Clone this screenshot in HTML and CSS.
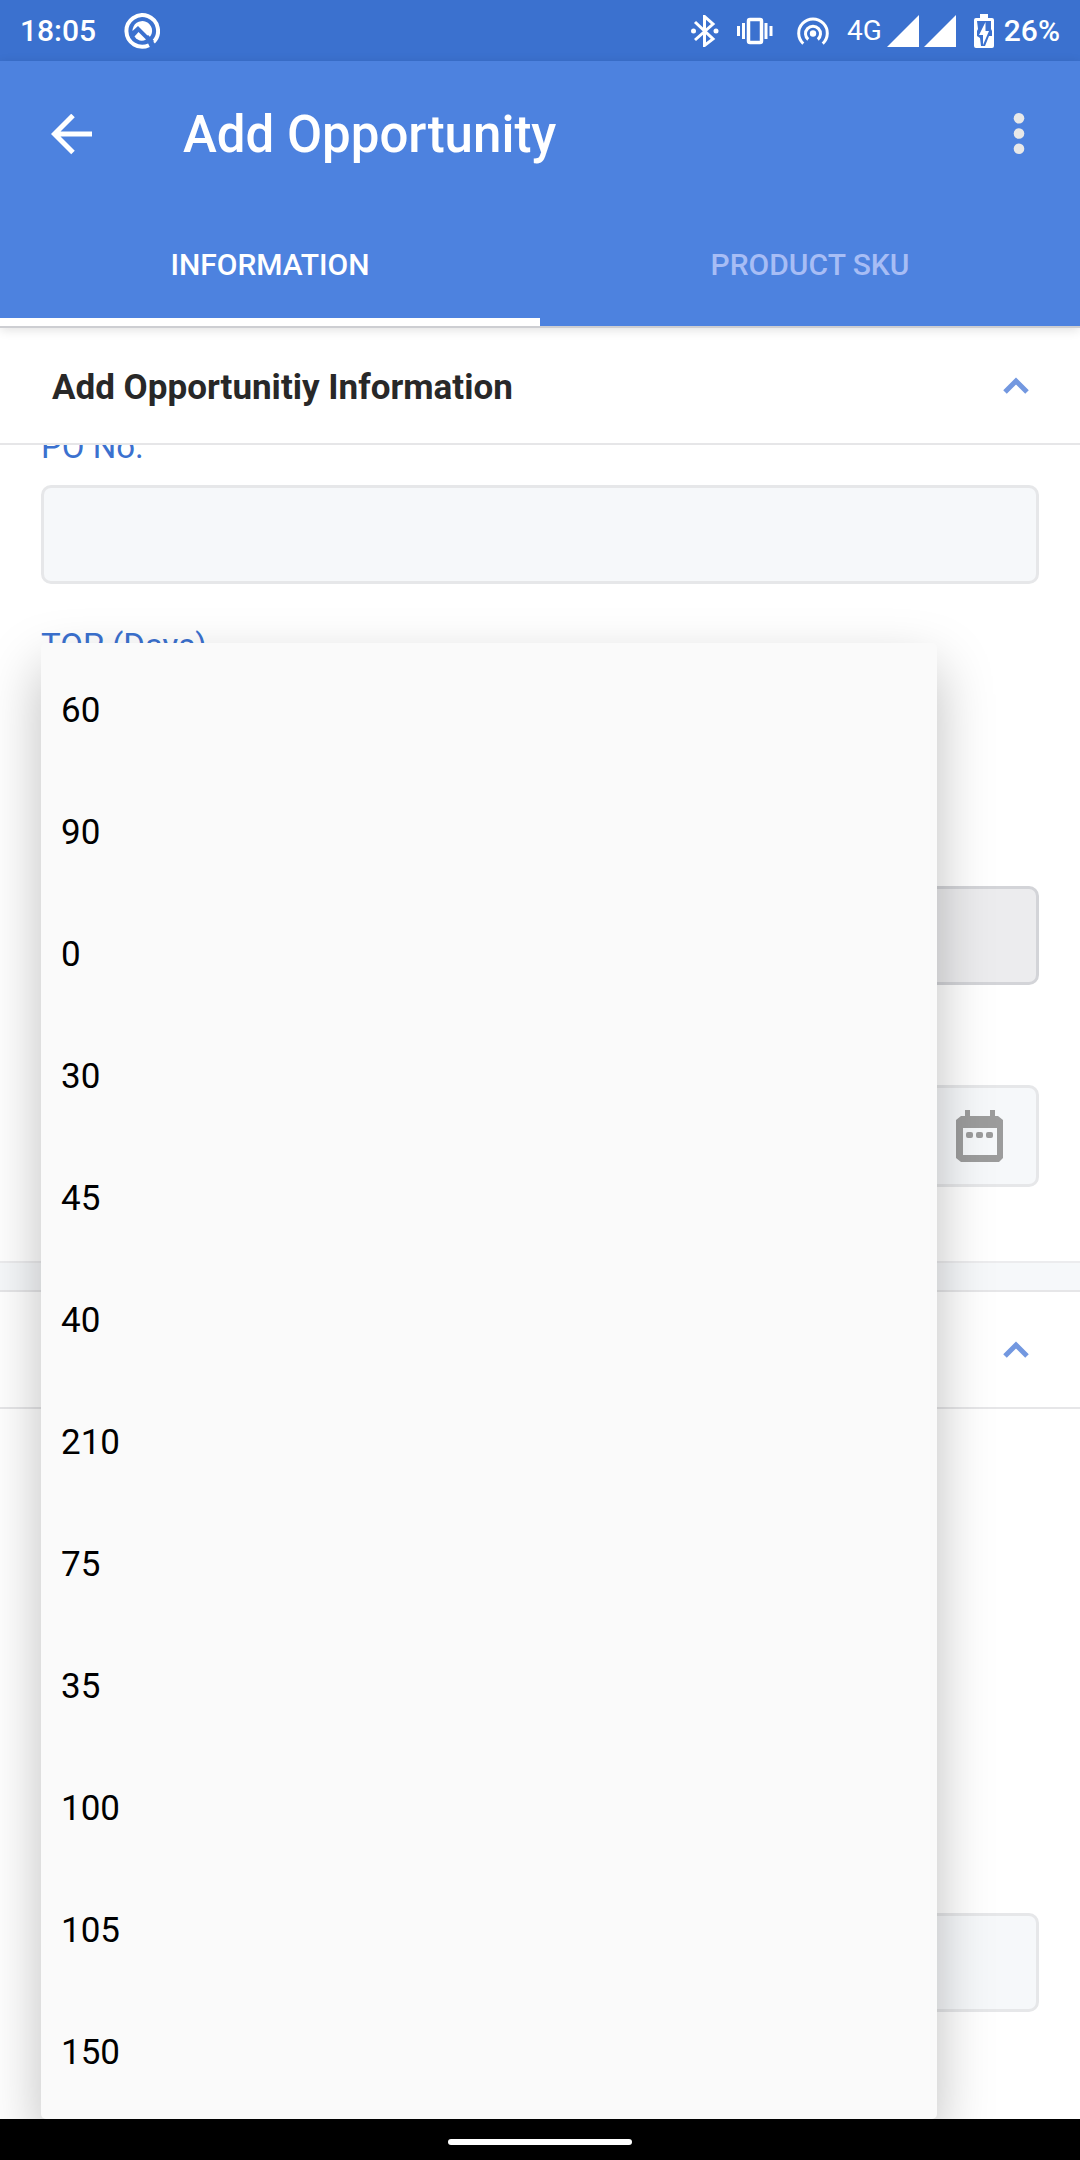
FILE: index.html
```
<!DOCTYPE html>
<html lang="en">
<head>
  <meta charset="UTF-8" />
  <meta name="viewport" content="width=device-width, initial-scale=1" />
  <title>Add Opportunity</title>
  <link rel="stylesheet" href="styles.css">
</head>

<body>
  <!-- Status bar -->
  <div class="status-bar">
    <div class="status-left">
      <span class="clock">18:05</span>
      <svg width="36" height="36" viewBox="0 0 36 36">
        <path d="M29.500 29A15.800 15.800 0 1 0 25 32.200" fill="none" stroke="#fff" stroke-width="4" />
        <path d="M8.500 18a9.800 9.800 0 1 1 17 6.500L14 13z" fill="#fff" />
        <path d="M10.500 23.500L14.500 19l7.500 7.500c-4 2.500-9 1-11.500-3z" fill="#fff" />
        <path d="M23 23l6 6" stroke="#3b71cf" stroke-width="3" />
      </svg>
    </div>
    <div class="status-right">
      <svg width="28" height="32" viewBox="0 0 28 32">
        <path d="M4 7l18 17l-8.500 6.500V1.500L22 9L4 25" fill="none" stroke="#fff" stroke-width="3" />
        <circle cx="2.500" cy="16" r="2.500" fill="#fff" />
        <circle cx="25" cy="16" r="2.500" fill="#fff" />
      </svg>
      <svg width="36" height="28" viewBox="0 0 36 28">
        <rect x="11.500" y="2.500" width="13" height="23" rx="1.500" fill="none" stroke="#fff" stroke-width="3.500" />
        <path d="M1.500 9v10M6.500 6v16M29 6v16M34 9v10" stroke="#fff" stroke-width="3" />
      </svg>
      <svg class="hotspot" width="32" height="28" viewBox="0 0 32 28">
        <circle cx="16" cy="16.500" r="3.200" fill="#fff" />
        <path d="M11.200 22.500a7.500 7.500 0 1 1 9.600 0M6.300 26.700a14.300 14.300 0 1 1 19.400 0" fill="none" stroke="#fff" stroke-width="3" />
      </svg>
      <div class="network">
        <span class="network-type">4G</span>
        <svg width="32" height="32" viewBox="0 0 32 32"><path d="M0 32L32 0v32z" fill="#fff" /></svg>
        <svg width="32" height="32" viewBox="0 0 32 32"><path d="M0 32L32 0v32z" fill="#fff" /></svg>
      </div>
      <div class="battery">
        <svg width="20" height="34" viewBox="0 0 20 34">
          <path d="M6 0h8v4h4a2 2 0 0 1 2 2v26a2 2 0 0 1-2 2H2a2 2 0 0 1-2-2V6a2 2 0 0 1 2-2h4z" fill="#fff" />
          <path d="M3 7h14v8l1 2v5h-3l-4 10H7l-1-8l-3-2v-5l1-2z" fill="#3b71cf" />
          <path d="M11.500 8L5 21h4v10l6-14h-3.500z" fill="#fff" />
        </svg>
        <span>26%</span>
      </div>
    </div>
  </div>

  <!-- App bar -->
  <header class="app-header">
    <div class="toolbar">
      <button type="button" class="icon-btn" aria-label="Back">
        <svg width="42" height="42" viewBox="0 0 42 42">
          <path d="M22 1.500L3.500 20L22 38.500M3 20H41" fill="none" stroke="#fff" stroke-width="5" />
        </svg>
      </button>
      <h1 class="page-title">Add Opportunity</h1>
      <button type="button" class="icon-btn" aria-label="More options">
        <svg width="12" height="44" viewBox="0 0 12 44">
          <g fill="#e8e8e8">
            <circle cx="6" cy="5.300" r="5.300" />
            <circle cx="6" cy="20.500" r="5.300" />
            <circle cx="6" cy="35.700" r="5.300" />
          </g>
        </svg>
      </button>
    </div>
    <nav class="tabs">
      <a href="#information" class="tab active">INFORMATION</a>
      <a href="#product-sku" class="tab">PRODUCT SKU</a>
    </nav>
  </header>

  <main>
    <section class="form-section" id="information">
      <div class="section-header">
        <h2>Add Opportunitiy Information</h2>
        <button type="button" class="icon-btn" aria-label="Collapse">
          <svg width="28" height="18" viewBox="0 0 28 18">
            <path d="M3 15L14 4L25 15" fill="none" stroke="#7398e0" stroke-width="5" />
          </svg>
        </button>
      </div>
      <div class="section-body scrolled">
        <div class="field">
          <label for="poNo">PO No.</label>
          <input type="text" id="poNo" class="control" />
        </div>

        <div class="field">
          <label for="top">TOP (Days)</label>
          <select id="top" class="control tall short"></select>
          <ul class="dropdown">
            <li><button type="button">60</button></li>
            <li><button type="button">90</button></li>
            <li><button type="button">0</button></li>
            <li><button type="button">30</button></li>
            <li><button type="button">45</button></li>
            <li><button type="button">40</button></li>
            <li><button type="button">210</button></li>
            <li><button type="button">75</button></li>
            <li><button type="button">35</button></li>
            <li><button type="button">100</button></li>
            <li><button type="button">105</button></li>
            <li><button type="button">150</button></li>
          </ul>
        </div>

        <div class="field">
          <label for="total"></label>
          <input type="text" id="total" class="control" aria-label="Total" disabled />
        </div>

        <div class="field">
          <label for="date"></label>
          <div class="control tall date-control">
            <input type="text" id="date" aria-label="Date" />
            <button type="button" class="icon-btn" aria-label="Pick a date">
              <svg width="48" height="52" viewBox="0 0 48 52">
                <path d="M9 0h5v6h20V0h5v6h3l5 4v38l-4 4H5l-5-4V10l5-4h4zM7 18v27h34V18z" fill="#9c9c9c" fill-rule="evenodd" />
                <g fill="#9c9c9c">
                  <rect x="10" y="22" width="7" height="6" rx="2" />
                  <rect x="20" y="22" width="7" height="6" rx="2" />
                  <rect x="30" y="22" width="7" height="6" rx="2" />
                </g>
              </svg>
            </button>
          </div>
        </div>
      </div>
    </section>

    <section class="form-section">
      <div class="section-header">
        <h2></h2>
        <button type="button" class="icon-btn" aria-label="Collapse">
          <svg width="28" height="18" viewBox="0 0 28 18">
            <path d="M3 15L14 4L25 15" fill="none" stroke="#7398e0" stroke-width="5" />
          </svg>
        </button>
      </div>
      <div class="section-body">
        <div class="field">
          <label for="type"></label>
          <select id="type" class="control tall short" aria-label="Type"></select>
        </div>
        <div class="field">
          <label for="status"></label>
          <select id="status" class="control tall short" aria-label="Status"></select>
        </div>
        <div class="field">
          <label for="note"></label>
          <input type="text" id="note" class="control" aria-label="Note" />
        </div>
      </div>
    </section>
  </main>

  <!-- Gesture bar -->
  <footer class="nav-bar">
    <span class="nav-handle"></span>
  </footer>
</body>
</html>
```

FILE: styles.css
```
* {
  box-sizing: border-box;
}

body {
  margin: 0;
  font-family: Roboto, 'Noto Sans', sans-serif;
  background: #fff;
  color: #282828;
  display: flex;
  flex-direction: column;
  height: 100vh;
}

svg {
  display: block;
  flex-shrink: 0;
}

.icon-btn {
  display: flex;
  padding: 0;
  border: none;
  background: none;
  cursor: pointer;
}

/* Status bar */
.status-bar {
  display: flex;
  justify-content: space-between;
  align-items: center;
  flex-shrink: 0;
  height: 61px;
  padding: 0 20px;
  background: #3b71cf;
  color: #fff;
  font-size: 30px;
  font-weight: 500;
}

.status-left,
.status-right,
.network,
.battery {
  display: flex;
  align-items: center;
}

.status-left {
  gap: 28px;
}

.status-right {
  gap: 18px;
}

.hotspot {
  margin-left: 6px;
}

.network {
  gap: 5px;
}

.network-type {
  font-size: 28px;
  font-weight: 400;
}

.battery {
  gap: 10px;
}

/* App bar */
.app-header {
  position: relative;
  z-index: 3;
  flex-shrink: 0;
  background: #4d82df;
  border-bottom: 2px solid #cdced2;
  box-shadow: 0 2px 10px rgba(0, 0, 0, 0.12);
}

.toolbar {
  display: flex;
  align-items: center;
  height: 149px;
  padding: 0 55px 2px 51px;
}

.page-title {
  flex: 1;
  margin: 0 0 0 90px;
  font-size: 51px;
  font-weight: 500;
  color: #fff;
}

.tabs {
  display: grid;
  grid-template-columns: 1fr 1fr;
}

.tab {
  display: flex;
  justify-content: center;
  align-items: center;
  height: 116px;
  border-bottom: 8px solid transparent;
  color: #a7bdf5;
  font-size: 30px;
  font-weight: 500;
  text-decoration: none;
}

.tab.active {
  color: #fff;
  border-bottom-color: #fff;
}

/* Form */
main {
  flex: 1;
  min-height: 0;
  overflow: hidden;
}

.section-header {
  position: relative;
  z-index: 1;
  display: flex;
  justify-content: space-between;
  align-items: center;
  height: 117px;
  padding: 0 50px;
  background: #fff;
  border-bottom: 2px solid #e6e6e8;
}

.section-header h2 {
  margin: 0;
  padding: 3px 0 0 2px;
  font-size: 35px;
  font-weight: 700;
}

.section-body {
  padding: 0 41px;
}

/* first section is scrolled a little under its header */
.section-body.scrolled {
  margin-top: -60px;
}

.form-section + .form-section {
  margin-top: 74px;
  border-top: 2px solid #ececee;
}

.form-section + .form-section::before {
  content: '';
  display: block;
  height: 27px;
  background: #f6f8fa;
  border-bottom: 2px solid #e6e6e8;
}

.field {
  position: relative;
  padding-top: 42px;
}

.field label {
  display: block;
  height: 40px;
  margin-bottom: 18px;
  color: #3b71cf;
  font-size: 33px;
  line-height: 40px;
}

.control {
  display: block;
  width: 100%;
  height: 99px;
  padding: 0 20px;
  border: 3px solid #e6e7e9;
  border-radius: 10px;
  background: #f6f8fa;
  font-family: inherit;
  font-size: 36px;
}

.control:disabled {
  background: #ececee;
  border-color: #d3d4d8;
}

.control.tall {
  height: 102px;
}

.control.short {
  width: calc(100% - 102px);
  appearance: none;
}

.date-control {
  display: flex;
  align-items: center;
  padding-right: 32px;
}

.date-control input {
  flex: 1;
  border: none;
  background: none;
  font: inherit;
}

/* Dropdown */
.dropdown {
  position: absolute;
  z-index: 2;
  top: 59px;
  left: 0;
  right: 102px;
  margin: 0;
  padding: 6px 0;
  list-style: none;
  background: #fafafa;
  border-radius: 5px;
  box-shadow: 0 24px 56px rgba(0, 0, 0, 0.26);
}

.dropdown button {
  display: block;
  width: 100%;
  height: 122px;
  padding: 0 20px;
  border: none;
  background: none;
  color: #000;
  font-family: inherit;
  font-size: 35px;
  text-align: left;
}

/* Gesture bar */
.nav-bar {
  display: flex;
  justify-content: center;
  align-items: center;
  position: relative;
  z-index: 3;
  flex-shrink: 0;
  height: 41px;
  padding-top: 5px;
  background: #000;
}

.nav-handle {
  width: 184px;
  height: 6px;
  border-radius: 3px;
  background: #fff;
}
```
